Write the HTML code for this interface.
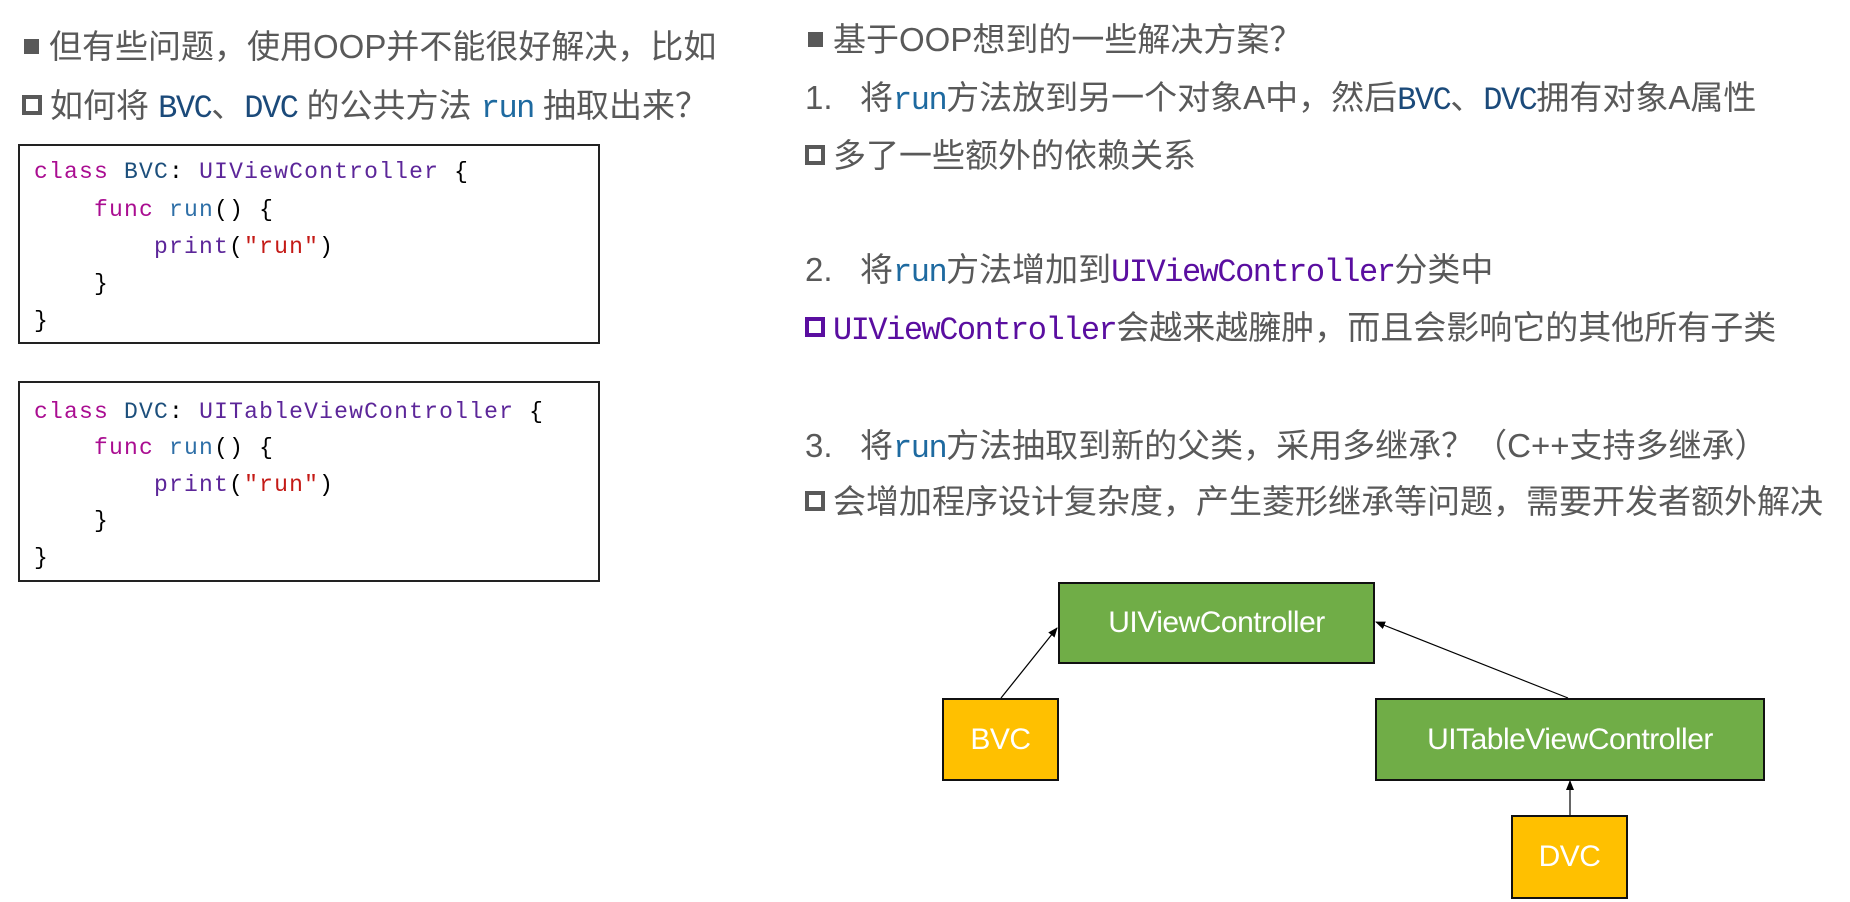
<!DOCTYPE html>
<html><head><meta charset="utf-8"><style>
*{margin:0;padding:0;box-sizing:border-box}
body{width:1850px;height:902px;background:#fff;position:relative;overflow:hidden;font-family:"Liberation Sans","Noto Sans CJK SC",sans-serif;color:#595959}
.l{position:absolute;height:40px;line-height:40px;font-size:33px;white-space:nowrap}
.m{font-family:"Liberation Mono","Noto Sans CJK SC",monospace;font-size:32px;letter-spacing:-1.5px}
.blue{color:#1e6aa0}.pur{color:#5a0ea0}.dblue{color:#1b4a7a}
.fs{display:inline-block;width:15px;height:15px;background:#595959;vertical-align:middle;margin-right:10px;position:relative;top:-3px}
.hs{display:inline-block;width:20px;height:20px;border:4px solid #595959;vertical-align:middle;margin-right:8px;position:relative;top:-3px}
.code{position:absolute;left:18px;width:582px;border:2px solid #222;background:#fff}
.cl{position:absolute;left:14px;height:36px;line-height:36px;font-family:"Liberation Mono",monospace;font-size:23px;letter-spacing:1.2px;color:#000;white-space:pre}
.k{color:#aa0d91}.t{color:#1c4f7c}.p{color:#5c2699}.f{color:#2e6fa7}.s{color:#c41a16}
.box{position:absolute;border:2px solid #111;color:#fff;font-size:30px;display:flex;align-items:center;justify-content:center;font-family:"Liberation Sans",sans-serif;letter-spacing:-0.5px}
.g{background:#70ad47}.y{background:#ffc000}
</style></head><body>
<div class="l" style="left:24px;top:27px"><span class="fs"></span>但有些问题，使用OOP并不能很好解决，比如</div>
<div class="l" style="left:22px;top:86px"><span class="hs"></span>如何将 <span class="m dblue">BVC</span>、<span class="m dblue">DVC</span> 的公共方法 <span class="m blue">run</span> 抽取出来？</div>

<div class="code" style="top:144px;height:200px">
<div class="cl" style="top:8px"><span class="k">class</span> <span class="t">BVC</span>: <span class="p">UIViewController</span> {</div>
<div class="cl" style="top:46px">    <span class="k">func</span> <span class="f">run</span>() {</div>
<div class="cl" style="top:83px">        <span class="p">print</span>(<span class="s">"run"</span>)</div>
<div class="cl" style="top:120px">    }</div>
<div class="cl" style="top:157px">}</div>
</div>
<div class="code" style="top:381px;height:201px">
<div class="cl" style="top:11px"><span class="k">class</span> <span class="t">DVC</span>: <span class="p">UITableViewController</span> {</div>
<div class="cl" style="top:47px">    <span class="k">func</span> <span class="f">run</span>() {</div>
<div class="cl" style="top:84px">        <span class="p">print</span>(<span class="s">"run"</span>)</div>
<div class="cl" style="top:120px">    }</div>
<div class="cl" style="top:157px">}</div>
</div>

<div class="l" style="left:808px;top:20px"><span class="fs"></span>基于OOP想到的一些解决方案？</div>
<div class="l" style="left:805px;top:78px">1.&nbsp;&nbsp;&nbsp;将<span class="m blue">run</span>方法放到另一个对象A中，然后<span class="m dblue">BVC</span>、<span class="m dblue">DVC</span>拥有对象A属性</div>
<div class="l" style="left:805px;top:136px"><span class="hs"></span>多了一些额外的依赖关系</div>
<div class="l" style="left:805px;top:250px">2.&nbsp;&nbsp;&nbsp;将<span class="m blue">run</span>方法增加到<span class="m pur">UIViewController</span>分类中</div>
<div class="l" style="left:805px;top:308px"><span class="hs" style="border-color:#5a0ea0"></span><span class="m pur">UIViewController</span>会越来越臃肿，而且会影响它的其他所有子类</div>
<div class="l" style="left:805px;top:426px">3.&nbsp;&nbsp;&nbsp;将<span class="m blue">run</span>方法抽取到新的父类，采用多继承？（C++支持多继承）</div>
<div class="l" style="left:805px;top:482px"><span class="hs"></span>会增加程序设计复杂度，产生菱形继承等问题，需要开发者额外解决</div>

<svg style="position:absolute;left:0;top:0" width="1850" height="902">
<defs><marker id="a" markerWidth="10" markerHeight="10" refX="9" refY="5" orient="auto" markerUnits="userSpaceOnUse"><path d="M0,1 L10,5 L0,9 z" fill="#000"/></marker></defs>
<line x1="1001" y1="698" x2="1057" y2="628" stroke="#000" stroke-width="1.2" marker-end="url(#a)"/>
<line x1="1568" y1="698" x2="1376" y2="622" stroke="#000" stroke-width="1.2" marker-end="url(#a)"/>
<line x1="1570" y1="815" x2="1570" y2="781" stroke="#000" stroke-width="1.2" marker-end="url(#a)"/>
</svg>
<div class="box g" style="left:1058px;top:582px;width:317px;height:82px">UIViewController</div>
<div class="box y" style="left:942px;top:698px;width:117px;height:83px">BVC</div>
<div class="box g" style="left:1375px;top:698px;width:390px;height:83px">UITableViewController</div>
<div class="box y" style="left:1511px;top:815px;width:117px;height:84px">DVC</div>
</body></html>
